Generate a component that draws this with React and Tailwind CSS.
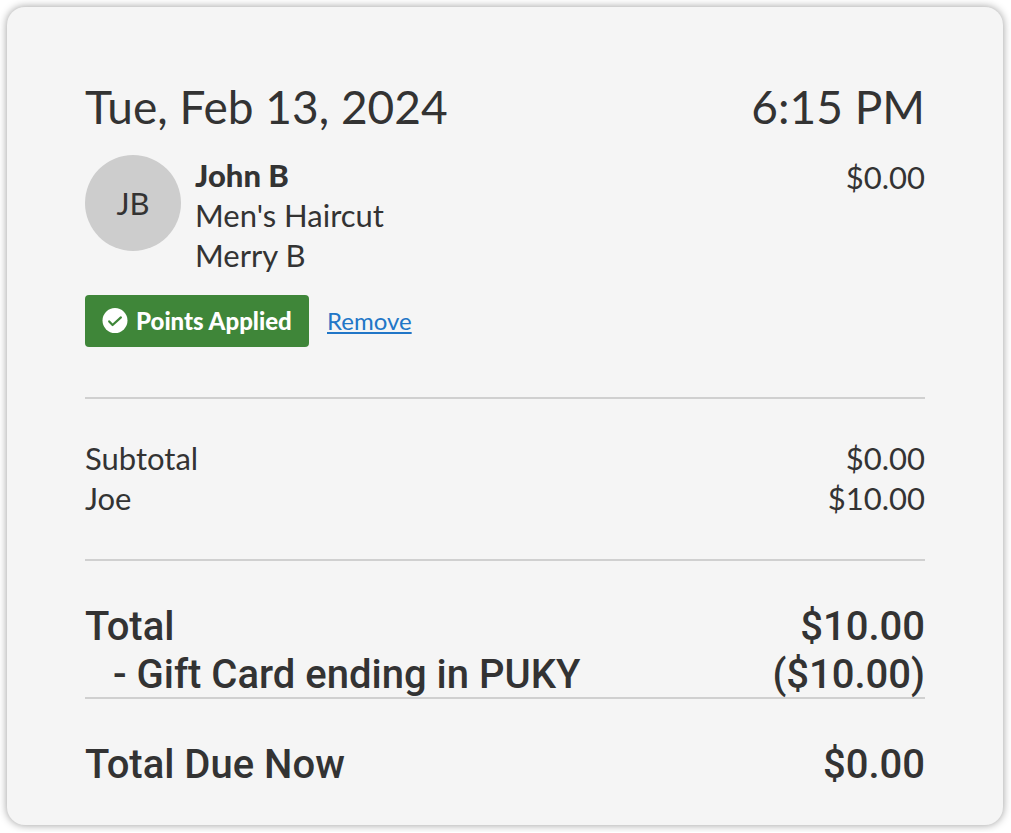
function CheckBadge() {
  return (
    <svg viewBox="0 0 26 26" className="size-[26px] shrink-0" aria-hidden="true">
      <circle cx="13" cy="12.6" r="12.5" fill="#ffffff" />
      <path d="M7.2 13.4l3.4 3.6 8.3-7.6" fill="none" stroke="#3f8639" strokeWidth="2.2" strokeLinecap="round" strokeLinejoin="round" />
    </svg>
  );
}

function Row({ label, amount, className = "" }) {
  return (
    <div className={`flex justify-between ${className}`}>
      <dt>{label}</dt>
      <dd>{amount}</dd>
    </div>
  );
}

export default function App() {
  return (
    <div className="bg-white py-[7px] pr-2 pl-[7px] font-['Lato',sans-serif] text-[#333333]">
      <main className="rounded-[18px] bg-[#f5f5f5] px-[78px] pt-[70px] pb-[36px] shadow-[0_0_8px_rgba(0,0,0,0.4)]">
        <header className="flex justify-between text-[46px] leading-[60px]">
          <h1>Tue, Feb 13, 2024</h1>
          <time dateTime="18:15">6:15 PM</time>
        </header>

        <section className="mt-[18px] flex items-start gap-[14px] text-[31px] leading-[40px]">
          <div className="flex size-24 shrink-0 items-center justify-center rounded-full bg-[#cdcdcd]">JB</div>
          <div className="flex-1">
            <p className="font-black">John B</p>
            <p>Men's Haircut</p>
            <p>Merry B</p>
          </div>
          <p className="pt-0.5">$0.00</p>
        </section>

        <div className="mt-5 flex items-center gap-[18px]">
          <button type="button" className="flex h-[52px] w-56 items-center gap-2 rounded-[4px] bg-[#3f8639] px-[17px] text-[24px] font-black whitespace-nowrap text-white">
            <CheckBadge />
            Points Applied
          </button>
          <a href="#remove" className="text-[24px] text-[#2176c7] underline decoration-2 underline-offset-2">
            Remove
          </a>
        </div>

        <dl className="mt-[50px] border-y-2 border-[#d0d0d0] pt-[39px] pb-[41px] text-[31px] leading-[40px]">
          <Row label="Subtotal" amount="$0.00" />
          <Row label="Joe" amount="$10.00" />
        </dl>

        <dl className="pt-[42px] font-['Roboto',sans-serif] text-[40px] leading-[48px] font-medium">
          <Row label="Total" amount="$10.00" />
          <Row label="- Gift Card ending in PUKY" amount="($10.00)" className="h-12 border-b-2 border-[#d0d0d0] pl-7" />
          <Row label="Total Due Now" amount="$0.00" className="pt-[42px]" />
        </dl>
      </main>
    </div>
  );
}
